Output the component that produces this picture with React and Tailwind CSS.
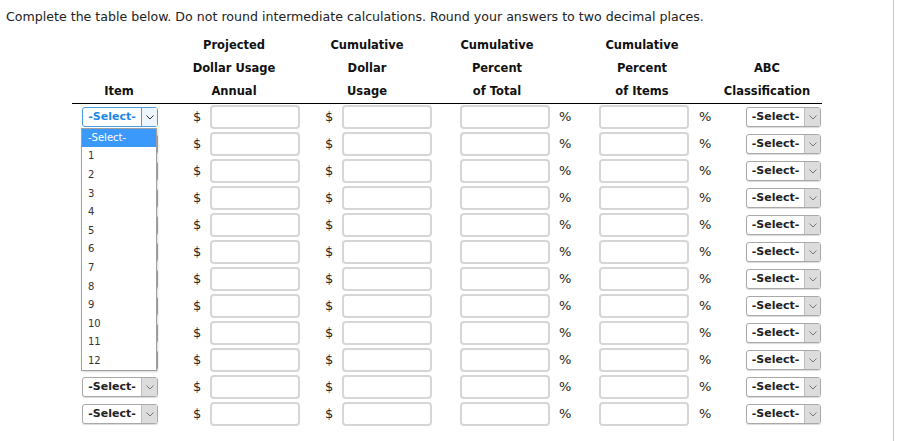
import { useState } from 'react'

const FONT = { fontFamily: '"DejaVu Sans", Verdana, sans-serif' }
const rows = Array.from({ length: 12 }, (_, i) => i)
const options = ['-Select-', '1', '2', '3', '4', '5', '6', '7', '8', '9', '10', '11', '12']

function Chevron({ className }) {
  return (
    <svg viewBox="0 0 8 5" className={className} fill="none">
      <path d="M0.5 0.5 L4 4 L7.5 0.5" stroke="currentColor" strokeWidth="1" />
    </svg>
  )
}

function Select({ focused, hidden, width }) {
  return (
    <div
      className={`flex h-[20px] items-stretch rounded-[3px] border bg-white ${
        focused ? 'border-[#4a9de0]' : 'border-[#a9a9a9] shadow-[0_1px_1px_rgba(0,0,0,0.15)]'
      } ${width}`}
    >
      <span
        className={`flex flex-1 items-center justify-center text-[11px] font-bold ${
          focused ? 'text-[#1e88e5]' : 'text-[#222]'
        } ${hidden ? 'invisible' : ''}`}
      >
        -Select-
      </span>
      <span
        className={`flex w-[16px] items-center justify-center border-l ${
          focused ? 'border-[#4a9de0] bg-[#eef6fd] text-[#333]' : 'border-[#bdbdbd] bg-[#dcdcdc] text-[#777]'
        }`}
      >
        <Chevron className="h-[5px] w-[8px]" />
      </span>
    </div>
  )
}

function Box() {
  return <div className="h-[24px] w-[90px] rounded-[4px] border-2 border-[#d6d6d6] bg-white" />
}

export default function App() {
  const [open] = useState(true)

  return (
    <div className="h-[441px] w-[894px] border-r border-[#c8c8c8] bg-white text-[#111]" style={FONT}>
      <p className="pl-[6px] pt-[8px] text-[12.6px] leading-[18px] text-[#222]">
        Complete the table below. Do not round intermediate calculations. Round your answers to two decimal places.
      </p>

      <div className="relative ml-[72px] mt-[7.5px] w-[750px]">
        <div className="flex border-b border-black text-center text-[11.5px] font-bold leading-[23px]">
          <div className="flex w-[94px] flex-col justify-end">
            <span>Item</span>
          </div>
          <div className="flex w-[136px] flex-col justify-end">
            <span>Projected</span>
            <span>Dollar Usage</span>
            <span>Annual</span>
          </div>
          <div className="flex w-[130px] flex-col justify-end">
            <span>Cumulative</span>
            <span>Dollar</span>
            <span>Usage</span>
          </div>
          <div className="flex w-[130px] flex-col justify-end">
            <span>Cumulative</span>
            <span>Percent</span>
            <span>of Total</span>
          </div>
          <div className="flex w-[160px] flex-col justify-end">
            <span>Cumulative</span>
            <span>Percent</span>
            <span>of Items</span>
          </div>
          <div className="flex w-[90px] flex-col justify-end">
            <span>ABC</span>
            <span>Classification</span>
          </div>
        </div>

        {rows.map((r) => (
          <div key={r} className="flex h-[27px] items-center text-[13px] text-[#222]">
            <div className="w-[10px]" />
            <Select focused={r === 0} hidden={open && r > 0 && r < 10} width="w-[76px]" />
            <div className="w-[35px]" />
            <span className="w-[17px]">$</span>
            <Box />
            <div className="w-[25px]" />
            <span className="w-[17px]">$</span>
            <Box />
            <div className="w-[28px]" />
            <Box />
            <div className="w-[9px]" />
            <span className="w-[40px]">%</span>
            <Box />
            <div className="w-[10px]" />
            <span className="w-[47px]">%</span>
            <Select width="w-[75px]" />
          </div>
        ))}

        {open && (
          <ul className="absolute left-[9px] top-[94px] w-[76px] border border-[#a0a0a0] bg-white text-[10px] leading-[12px] text-[#333] shadow-[1px_1px_2px_rgba(0,0,0,0.15)]">
            {options.map((o, i) => (
              <li
                key={o}
                className={`flex h-[18.6px] items-center pl-[6px] ${i === 0 ? 'bg-[#3b99fc] text-white' : ''}`}
              >
                {o}
              </li>
            ))}
          </ul>
        )}
      </div>
    </div>
  )
}
